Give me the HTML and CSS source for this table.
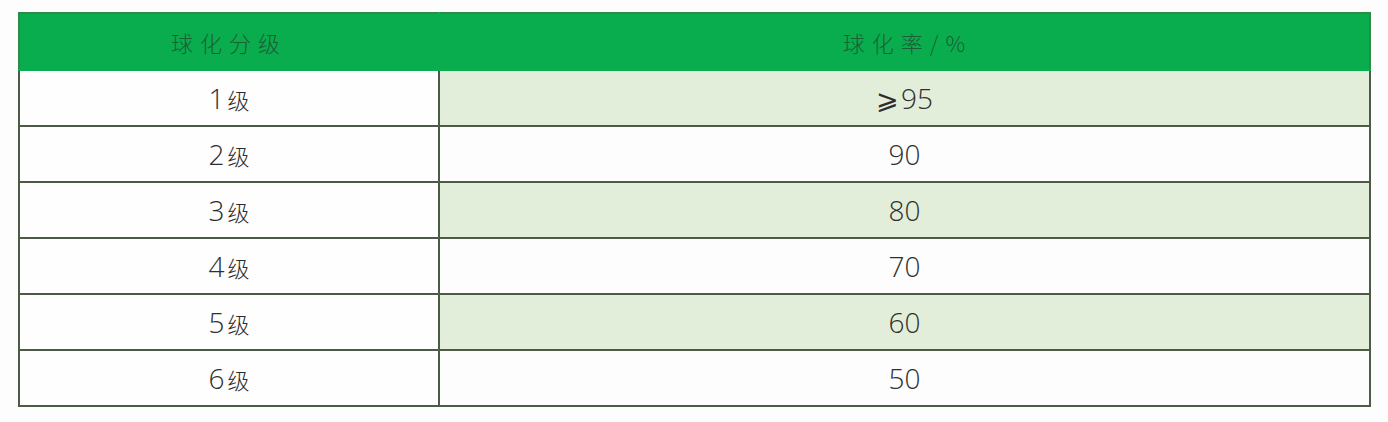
FILE: index.html
```html
<!DOCTYPE html>
<html lang="zh">
<head>
<meta charset="utf-8">
<link rel="stylesheet" href="styles.css">
</head>
<body>
<table class="grade-table">
  <thead>
    <tr><th class="col-grade">球化分级</th><th class="col-rate">球化率/%</th></tr>
  </thead>
  <tbody>
    <tr class="odd"><td>1<span class="unit">级</span></td><td class="rate"><span class="sym">⩾</span>95</td></tr>
    <tr><td>2<span class="unit">级</span></td><td class="rate">90</td></tr>
    <tr class="odd"><td>3<span class="unit">级</span></td><td class="rate">80</td></tr>
    <tr><td>4<span class="unit">级</span></td><td class="rate">70</td></tr>
    <tr class="odd"><td>5<span class="unit">级</span></td><td class="rate">60</td></tr>
    <tr><td>6<span class="unit">级</span></td><td class="rate">50</td></tr>
  </tbody>
</table>
</body>
</html>
```
FILE: styles.css
```css
html, body {
  margin: 0;
  padding: 0;
  background: #fdfdfd;
}
body {
  padding: 12px 0 0 18px;
  font-family: "Open Sans", "Noto Sans CJK SC", sans-serif;
}
.grade-table {
  border-collapse: collapse;
  width: 1353px;
  table-layout: fixed;
}
.grade-table th {
  height: 55px;
  background: #0aad4d;
  color: #1a5f35;
  font-family: "Noto Sans CJK SC", sans-serif;
  font-weight: 300;
  font-size: 22px;
  letter-spacing: 7px;
  text-align: center;
  border: 2px solid #2f8a45;
  border-bottom: 2px solid #0aad4d;
  padding: 0;
}
.grade-table th.col-grade { width: 418px; border-right-color: #0aad4d; }
.grade-table th.col-rate { padding-left: 6px; }
.grade-table td {
  height: 54px;
  border: 2px solid #4d5a47;
  text-align: center;
  font-size: 28px;
  font-weight: 300;
  color: #2e2e2e;
  padding: 0;
}
.grade-table .unit {
  font-family: "Noto Sans CJK SC", sans-serif;
  font-size: 22px;
  font-weight: 300;
  margin-left: 3px;
}
.grade-table .sym {
  font-family: "DejaVu Sans", sans-serif;
  font-size: 27px;
  margin-right: 2px;
}
.grade-table tr.odd td.rate { background: #e2eed9; }
.grade-table td:first-child { background: #fefefe; }
```
